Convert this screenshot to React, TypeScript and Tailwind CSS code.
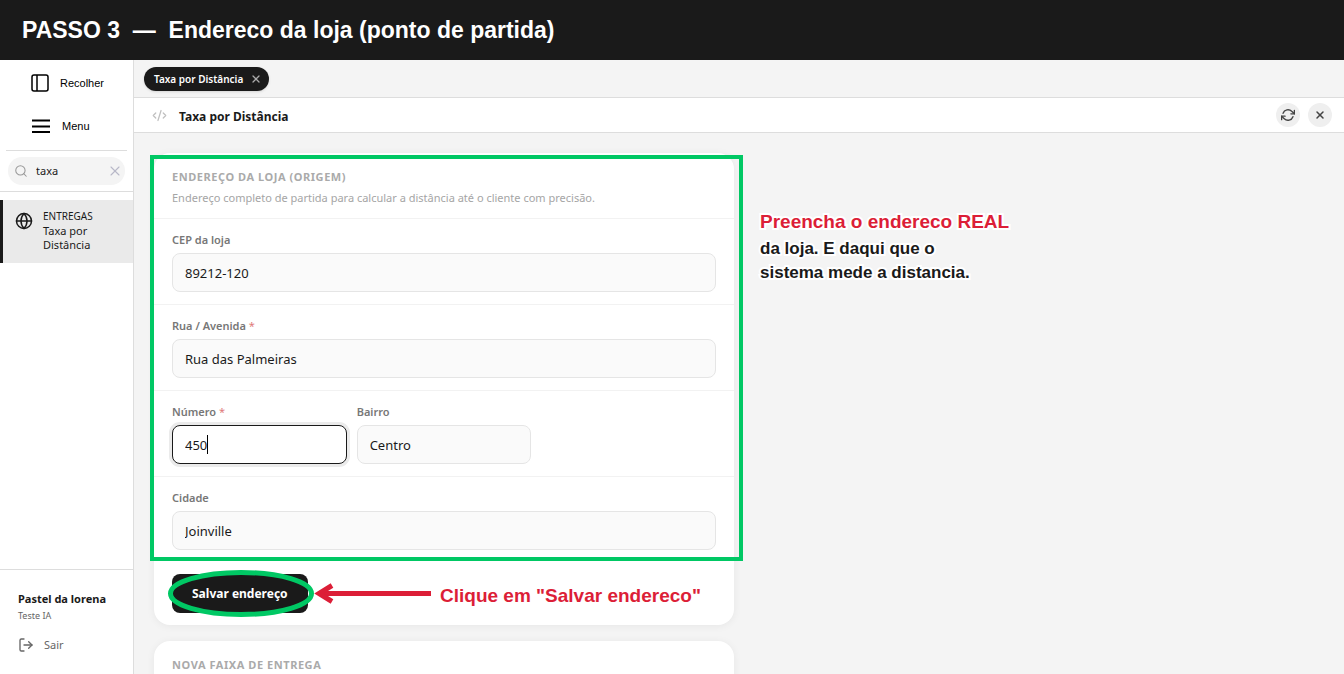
import { useRef, useEffect, type ReactNode } from "react";
import { CodeXml, Globe, LogOut, Search, X } from "lucide-react";

type FieldProps = {
  id: string;
  label: string;
  value: string;
  required?: boolean;
  focused?: boolean;
};

function Field({ id, label, value, required, focused }: FieldProps) {
  const ref = useRef<HTMLInputElement>(null);

  useEffect(() => {
    if (focused && ref.current) {
      ref.current.focus();
      ref.current.setSelectionRange(value.length, value.length);
    }
  }, [focused, value]);

  return (
    <div className="flex min-w-0 flex-col gap-1">
      <label htmlFor={id} className="text-[11px] leading-[18px] font-semibold text-[#777777]">
        {label}
        {required && <span className="font-normal text-[#e07a7a]"> *</span>}
      </label>
      <div className="relative flex items-center">
        <input
          ref={ref}
          id={id}
          type="text"
          defaultValue={value}
          className="h-[39px] w-full rounded-lg border border-[#e5e5e5] bg-[#fafafa] px-3 text-[13px] text-[#1a1a1a] caret-transparent outline-none focus:border-[#1a1a1a] focus:bg-white focus:ring-3 focus:ring-[#ebebeb]"
        />
        {focused && <span className="pointer-events-none absolute left-[35px] h-[19px] w-px bg-black" aria-hidden="true" />}
      </div>
    </div>
  );
}

function Row({ children }: { children: ReactNode }) {
  return <div className="border-b border-[#f2f2f2] px-[18px] py-3 last-of-type:border-b-0">{children}</div>;
}

function PanelIcon() {
  return (
    <svg width="18" height="18" viewBox="0 0 18 18" fill="none" stroke="currentColor" strokeWidth="1.5" aria-hidden="true">
      <rect x="1" y="1" width="16" height="16" rx="2" />
      <path d="M6 1v16" />
    </svg>
  );
}

function MenuIcon() {
  return (
    <svg width="20" height="16" viewBox="0 0 20 16" fill="none" stroke="currentColor" strokeWidth="1.8" aria-hidden="true">
      <path d="M1 2.5h18M1 8.5h18M1 14h18" />
    </svg>
  );
}

function RefreshIcon() {
  return (
    <svg width="14" height="14" viewBox="0 0 24 24" fill="none" stroke="currentColor" strokeWidth="2.4" strokeLinecap="round" strokeLinejoin="round" aria-hidden="true">
      <path d="M23 4v6h-6" />
      <path d="M1 20v-6h6" />
      <path d="M3.51 9a9 9 0 0 1 14.85-3.36L23 10M1 14l4.64 4.36A9 9 0 0 0 20.49 15" />
    </svg>
  );
}

function Sidebar() {
  return (
    <aside className="flex w-[134px] shrink-0 flex-col border-r border-[#dddddd] bg-white">
      <div className="mx-1.5 flex flex-col border-b border-[#dddddd] pt-0.5 pb-0.5 font-['Liberation_Sans',Arial,sans-serif] text-[11px] text-black">
        <button type="button" className="flex h-[42px] items-center gap-[11px] pl-[25px]">
          <PanelIcon />
          Recolher
        </button>
        <button type="button" className="flex h-11 items-center gap-[11px] pl-[25px]">
          <MenuIcon />
          Menu
        </button>
      </div>
      <div className="border-b border-[#dddddd] px-2 py-1.5">
        <div className="flex h-7 items-center gap-2 rounded-full bg-[#f4f4f4] pr-0.5 pl-1.5">
          <Search size={14} strokeWidth={1.8} className="shrink-0 text-[#999999]" />
          <input
            type="text"
            aria-label="Buscar"
            defaultValue="taxa"
            className="w-full min-w-0 bg-transparent text-[11px] text-[#1a1a1a] outline-none"
          />
          <button type="button" aria-label="Limpar" className="shrink-0 text-[#b8b8c8]">
            <X size={16} strokeWidth={1.6} />
          </button>
        </div>
      </div>
      <nav className="flex-1 pt-2">
        <a href="#taxa" className="flex gap-2.5 border-l-3 border-[#1a1a1a] bg-[#eaeaea] pt-[9px] pb-[11px] pl-3 text-[#1a1a1a]">
          <Globe size={18} strokeWidth={2} className="mt-[3px] shrink-0" />
          <span className="flex flex-col text-[11px] leading-[14px]">
            <span className="text-[10px] leading-[15px]">ENTREGAS</span>
            <span>Taxa por</span>
            <span>Distância</span>
          </span>
        </a>
      </nav>
      <div className="border-t border-[#dddddd] px-[18px] pt-5 pb-5">
        <p className="text-[11px] leading-[18px] font-bold text-[#1a1a1a]">Pastel da lorena</p>
        <p className="text-[9px] leading-4 text-[#666666]">Teste IA</p>
        <button type="button" className="mt-3 flex h-[18px] items-center gap-2.5 text-[11px] text-[#666666]">
          <LogOut size={16} strokeWidth={2} />
          Sair
        </button>
      </div>
    </aside>
  );
}

function Annotations() {
  return (
    <>
      <div className="pointer-events-none absolute top-0.5 -left-1 h-[406px] w-[593px] border-4 border-[#00c864]" />
      <svg className="pointer-events-none absolute top-[412px] left-2.5" width="274" height="56" viewBox="0 0 274 56" fill="none" aria-hidden="true">
        <ellipse cx="77" cy="28.5" rx="70.5" ry="21" stroke="#00c864" strokeWidth="5" />
        <path d="M267 28.5H156" stroke="#dc1e37" strokeWidth="5" />
        <path d="M168 20.5L155 28.5L168 36.5" stroke="#dc1e37" strokeWidth="5" />
      </svg>
      <p className="absolute top-[430px] left-[286px] font-['Liberation_Sans',Arial,sans-serif] text-[19px] leading-[26px] font-bold whitespace-nowrap text-[#dc1e37]">
        Clique em "Salvar endereco"
      </p>
      <div className="absolute top-[55px] left-[606px] flex flex-col gap-px font-['Liberation_Sans',Arial,sans-serif] font-bold whitespace-nowrap text-[#1a1a1a] [paint-order:stroke_fill] [-webkit-text-stroke:4px_white]">
        <p className="text-[19px] leading-7 text-[#dc1e37]">Preencha o endereco REAL</p>
        <p className="text-[17px] leading-6">
          da loja. E daqui que o
          <br />
          sistema mede a distancia.
        </p>
      </div>
    </>
  );
}

export default function App() {
  return (
    <div className="flex h-screen flex-col overflow-hidden bg-[#f4f4f4] font-['Noto_Sans','Segoe_UI',sans-serif] text-[#1a1a1a]">
      <header className="flex h-[60px] shrink-0 items-center bg-[#1a1a1a] px-[22px]">
        <h1 className="font-['Liberation_Sans',Arial,sans-serif] text-[23px] font-bold whitespace-pre text-white">
          PASSO 3  —  Endereco da loja (ponto de partida)
        </h1>
      </header>
      <div className="flex min-h-0 flex-1">
        <Sidebar />
        <main className="flex min-w-0 flex-1 flex-col">
          <div className="flex h-[38px] shrink-0 items-center border-b border-[#dddddd] px-2.5">
            <div className="flex h-6 items-center gap-[7px] rounded-full bg-[#1a1a1a] pr-[7px] pl-2.5 text-[10px] leading-4 font-semibold text-white shadow-sm">
              Taxa por Distância
              <button type="button" aria-label="Fechar aba" className="text-[#aaaaaa]">
                <X size={12} strokeWidth={2.5} />
              </button>
            </div>
          </div>
          <div className="flex h-[35px] shrink-0 items-center border-b border-[#dddddd] bg-white pr-3 pl-[18px]">
            <CodeXml size={15} strokeWidth={2} className="text-[#c0c0c0]" />
            <h2 className="ml-3 flex-1 pt-1 text-[12px] leading-4 font-bold">Taxa por Distância</h2>
            <div className="flex gap-2 text-[#444444]">
              <button type="button" aria-label="Atualizar" className="flex size-6 items-center justify-center rounded-full bg-[#efefef]">
                <RefreshIcon />
              </button>
              <button type="button" aria-label="Fechar" className="flex size-6 items-center justify-center rounded-full bg-[#efefef]">
                <X size={12} strokeWidth={3} />
              </button>
            </div>
          </div>
          <div className="min-h-0 flex-1 overflow-hidden p-5">
            <div className="relative flex max-w-[580px] flex-col gap-4">
              <form className="rounded-2xl bg-white shadow-[0_1px_8px_rgba(0,0,0,0.06)]" onSubmit={(e) => e.preventDefault()}>
                <div className="border-b border-[#f2f2f2] px-[18px] pt-4 pb-3">
                  <h3 className="text-[11px] leading-4 font-bold tracking-wider text-[#aaaaaa]">ENDEREÇO DA LOJA (ORIGEM)</h3>
                  <p className="mt-1 text-[11px] leading-[17px] text-[#a5a5a5]">
                    Endereço completo de partida para calcular a distância até o cliente com precisão.
                  </p>
                </div>
                <Row>
                  <Field id="cep" label="CEP da loja" value="89212-120" />
                </Row>
                <Row>
                  <Field id="rua" label="Rua / Avenida" value="Rua das Palmeiras" required />
                </Row>
                <Row>
                  <div className="grid grid-cols-3 gap-2.5">
                    <Field id="numero" label="Número" value="450" required focused />
                    <Field id="bairro" label="Bairro" value="Centro" />
                  </div>
                </Row>
                <Row>
                  <Field id="cidade" label="Cidade" value="Joinville" />
                </Row>
                <footer className="px-[18px] py-3">
                  <button type="submit" className="block h-[39px] rounded-lg bg-[#1a1a1a] px-5 text-[12px] font-bold text-white">
                    Salvar endereço
                  </button>
                </footer>
              </form>
              <section className="h-40 rounded-2xl bg-white px-[18px] py-4 shadow-[0_1px_8px_rgba(0,0,0,0.06)]">
                <h3 className="text-[11px] leading-4 font-bold tracking-wider text-[#aaaaaa]">NOVA FAIXA DE ENTREGA</h3>
              </section>
              <Annotations />
            </div>
          </div>
        </main>
      </div>
    </div>
  );
}
